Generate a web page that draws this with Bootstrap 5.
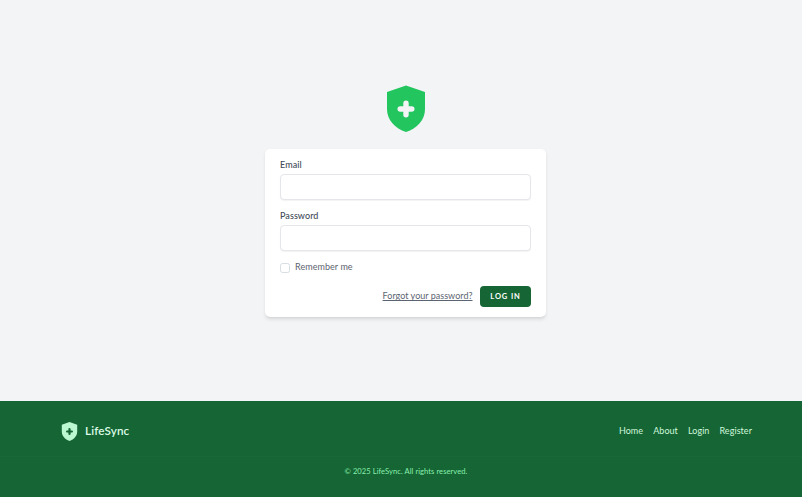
<!DOCTYPE html>
<html lang="en">
<head>
<meta charset="utf-8">
<meta name="viewport" content="width=device-width, initial-scale=1">
<title>LifeSync</title>
<link href="https://cdn.jsdelivr.net/npm/bootstrap@5.3.0/dist/css/bootstrap.min.css" rel="stylesheet">
<style>
body{font-family:Lato,"Open Sans",sans-serif;font-size:9px;letter-spacing:.06px;line-height:12.5px;background:#f3f4f6;color:#5b6470}
.auth-area{height:401px;padding-top:84px}
.brand-shield{width:50px;height:50px;margin-left:10px}
.login-card{width:281px;height:168px;margin-top:15px;padding:10px 15px;border-radius:5px;box-shadow:0 2.5px 4px -1px rgba(0,0,0,.12),0 1px 2px -1px rgba(0,0,0,.1)}
.field-label{font-weight:500;color:#414b59;margin-bottom:1.5px;height:13.5px;padding-left:.5px}
.login-card .form-control{height:26px;min-height:0;border:1px solid #e4e6ea;border-radius:4px;box-shadow:0 1px 1px rgba(0,0,0,.05);padding:3px 8px;font-size:10px}
.second-field{margin-top:10px}
.remember-row{margin-top:11px;height:11px}
.login-card .form-check-input{width:10px;height:10px;margin:0 5.5px 0 0;border:1px solid #d9dce1;border-radius:2.5px}
.action-row{margin-top:13px;gap:7px}
.action-row a{color:#5b6470;letter-spacing:.02px}
.btn-login{width:51px;height:21px;padding:0 0 0 1px;background:#166534;color:#fff;border:0;border-radius:4px;font-size:7.5px;font-weight:700;letter-spacing:.9px;line-height:21px}
.btn-login:hover{background:#14532d;color:#fff}
.site-footer{height:96px;background:#166534;color:#bbf7d0}
.footer-main{height:55px;padding:5px 50px 0 60px}
.footer-main svg{width:19px;height:19px;margin-right:6px}
.wordmark{font-size:11.7px;font-weight:600;letter-spacing:.13px;color:#dcfce7;padding-bottom:1.5px}
.footer-nav{gap:10px}
.footer-nav a{color:#cff8dc;text-decoration:none}
.footer-legal{border-top:1px solid #176a36;padding:8px 0 0 2px;font-size:7.6px;letter-spacing:.05px;color:#86efac}
.t{white-space:nowrap}
</style>
<script src="https://cdn.jsdelivr.net/npm/bootstrap@5.3.0/dist/js/bootstrap.bundle.min.js"></script>
</head>
<body class="overflow-hidden">
<main class="auth-area d-flex flex-column align-items-center">
  <svg class="brand-shield" viewBox="0 0 50 50" aria-label="LifeSync"><path fill="#22c55e" d="M25 1.500 44 8v17c0 11-8 19.500-19 23C14 44.500 6 36 6 25V8Z"/><path fill="none" stroke="#f3f4f6" stroke-width="5.400" stroke-linecap="round" d="M25 19.200v11.600M19.200 25h11.600"/></svg>
  <form class="login-card bg-white ms-2">
    <label class="field-label d-block" for="email"><span class="t">Email</span></label>
    <input class="form-control" id="email" type="email">
    <label class="field-label second-field d-block" for="password"><span class="t">Password</span></label>
    <input class="form-control" id="password" type="password">
    <div class="remember-row d-flex align-items-center">
      <input class="form-check-input" id="remember" type="checkbox"><label class="t" for="remember">Remember me</label>
    </div>
    <div class="action-row d-flex align-items-center justify-content-end">
      <a href="#" class="t">Forgot your password?</a>
      <button class="btn btn-login t" type="button">LOG IN</button>
    </div>
  </form>
</main>
<footer class="site-footer">
  <div class="footer-main d-flex align-items-center justify-content-between">
    <div class="d-flex align-items-center">
      <svg viewBox="0 0 19 19" aria-hidden="true"><path fill="#bbf7d0" d="M9.500 0 17.200 2.700v6.800c0 4.500-3.200 7.900-7.700 9.500C5 17.400 1.800 14 1.800 9.500V2.700Z"/><path fill="none" stroke="#166534" stroke-width="2.200" stroke-linecap="round" d="M9.500 7.100v4.800M7.100 9.500h4.800"/></svg>
      <span class="wordmark t">LifeSync</span>
    </div>
    <nav class="footer-nav d-flex"><a class="t" href="#">Home</a><a class="t" href="#">About</a><a class="t" href="#">Login</a><a class="t" href="#">Register</a></nav>
  </div>
  <div class="footer-legal text-center"><span class="t ms-2">© 2025 LifeSync. All rights reserved.</span></div>
</footer>
</body>
</html>
